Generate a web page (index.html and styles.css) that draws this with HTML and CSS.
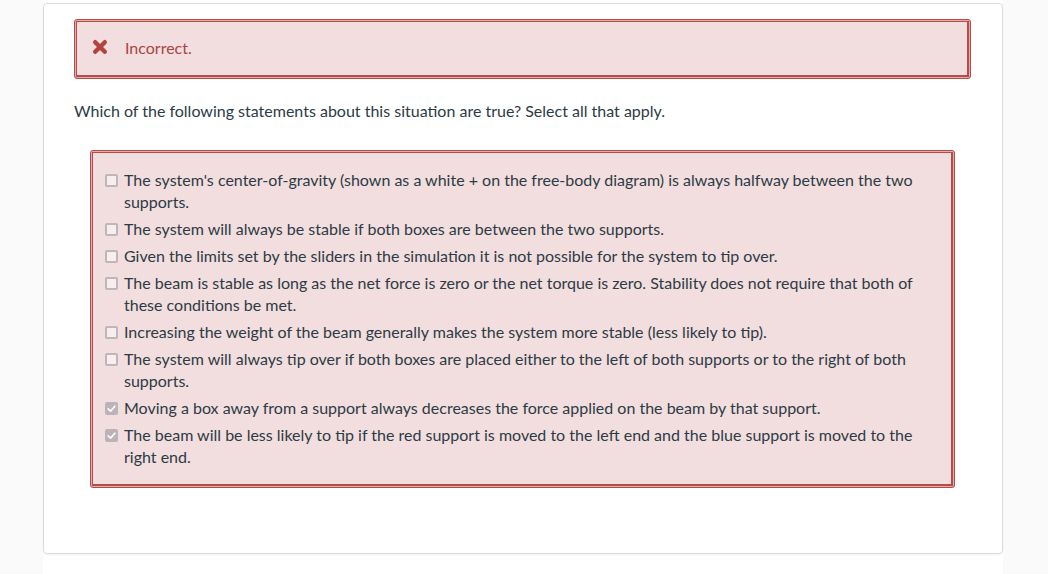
FILE: index.html
```html
<!DOCTYPE html>
<html>
<head>
<meta charset="utf-8">
<link rel="stylesheet" href="styles.css">
</head>
<body>
<div class="column">
  <div class="card">
    <div class="alert-outer">
      <div class="alert">
        <svg class="x-icon" viewBox="0 0 16 16" width="16" height="16"><path d="M3.2 3.2 L12.8 12.8 M12.8 3.2 L3.2 12.8" stroke="#b2433f" stroke-width="4.4" stroke-linecap="round"/></svg>
        <span>Incorrect.</span>
      </div>
    </div>
    <p class="question">Which of the following statements about this situation are true? Select all that apply.</p>
    <div class="answers-outer">
      <div class="answers">
        <label class="opt"><span class="cb"></span><span class="txt">The system's center-of-gravity (shown as a white + on the free-body diagram) is always halfway between the two supports.</span></label>
        <label class="opt"><span class="cb"></span><span class="txt">The system will always be stable if both boxes are between the two supports.</span></label>
        <label class="opt"><span class="cb"></span><span class="txt">Given the limits set by the sliders in the simulation it is not possible for the system to tip over.</span></label>
        <label class="opt"><span class="cb"></span><span class="txt">The beam is stable as long as the net force is zero or the net torque is zero. Stability does not require that both of these conditions be met.</span></label>
        <label class="opt"><span class="cb"></span><span class="txt">Increasing the weight of the beam generally makes the system more stable (less likely to tip).</span></label>
        <label class="opt"><span class="cb"></span><span class="txt">The system will always tip over if both boxes are placed either to the left of both supports or to the right of both supports.</span></label>
        <label class="opt"><span class="cb checked"><svg viewBox="0 0 13 13" width="13" height="13"><path d="M3.2 6.8 L5.6 9.1 L9.9 4.2" fill="none" stroke="#fff" stroke-width="1.6" stroke-linecap="round" stroke-linejoin="round"/></svg></span><span class="txt">Moving a box away from a support always decreases the force applied on the beam by that support.</span></label>
        <label class="opt"><span class="cb checked"><svg viewBox="0 0 13 13" width="13" height="13"><path d="M3.2 6.8 L5.6 9.1 L9.9 4.2" fill="none" stroke="#fff" stroke-width="1.6" stroke-linecap="round" stroke-linejoin="round"/></svg></span><span class="txt">The beam will be less likely to tip if the red support is moved to the left end and the blue support is moved to the right end.</span></label>
      </div>
    </div>
  </div>
</div>
</body>
</html>
```
FILE: styles.css
```css
html, body {
  margin: 0;
  padding: 0;
  height: 100%;
}
body {
  background: #fafafa;
  font-family: Lato, "Open Sans", sans-serif;
  color: #2d3b45;
  font-size: 16px;
}
.column {
  width: 960px;
  margin-left: 43px;
  background: #fff;
  min-height: 100%;
  padding-top: 3px;
  box-sizing: border-box;
}
.card {
  border: 1px solid #dcdcdc;
  border-radius: 4px;
  box-shadow: 0 1px 2px rgba(0,0,0,0.06);
  padding: 15px 31px 64px 30px;
  height: 551px;
  box-sizing: border-box;
}
.alert-outer {
  border: 1px solid #b74b4a;
  border-radius: 3px;
  background: #e4acab;
  padding: 1px;
}
.alert {
  border: 1px solid #b74b4a;
  border-right-width: 2px;
  border-bottom-width: 2px;
  background: #f2dede;
  height: 51px;
  box-sizing: content-box;
  display: flex;
  align-items: center;
  padding-left: 15px;
  padding-bottom: 2px;
  color: #a94442;
  font-size: 16px;
}
.x-icon {
  margin-right: 17px;
  margin-top: -1px;
}
.question {
  margin: 21px 0 28px 0;
  line-height: 22px;
}
.answers-outer {
  margin: 0 16px;
  border: 1px solid #b74b4a;
  border-radius: 3px;
  background: #e4acab;
  padding: 1px;
}
.answers {
  border: 1px solid #b74b4a;
  border-right-width: 2px;
  border-bottom-width: 2px;
  background: #f2dede;
  padding: 16px 20px 16px 12px;
  display: flex;
  flex-direction: column;
  gap: 5px;
}
.opt {
  display: flex;
  align-items: flex-start;
  line-height: 22px;
}
.cb {
  flex: none;
  width: 13px;
  height: 13px;
  box-sizing: border-box;
  border: 2px solid #bdb6ba;
  border-radius: 2px;
  background: #f8eeee;
  margin-top: 5px;
  margin-right: 6px;
  display: flex;
}
.cb.checked {
  border: none;
  background: #bcb3b8;
}
.txt {
  flex: 1;
}
```
